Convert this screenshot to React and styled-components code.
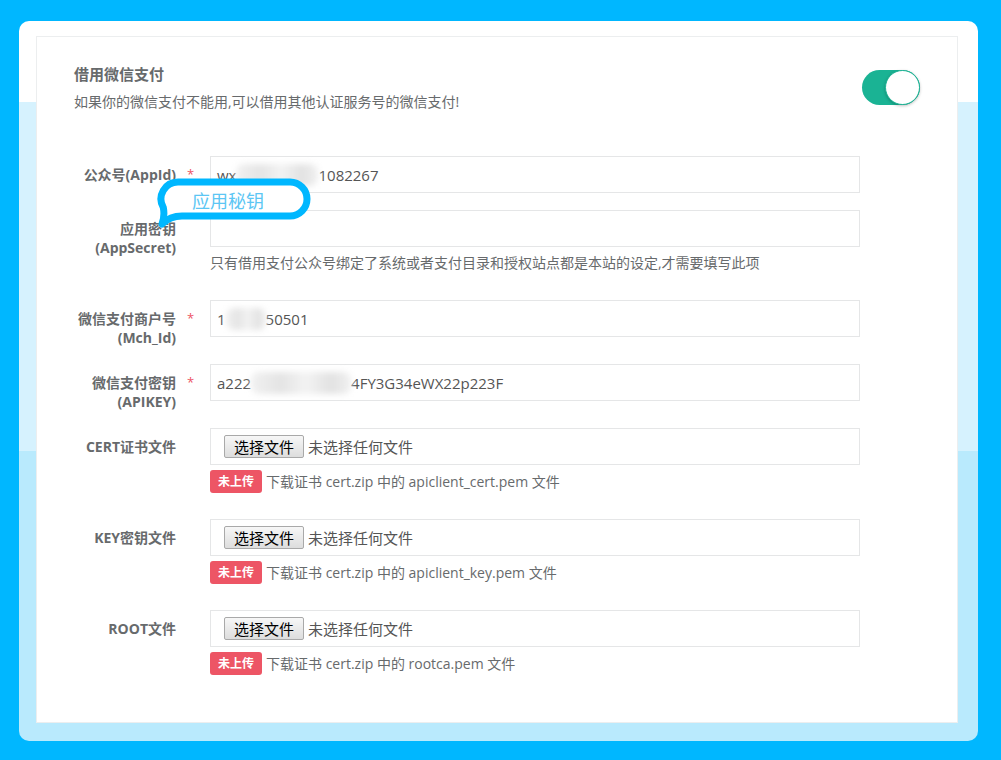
import React from "react";
import styled, { createGlobalStyle } from "styled-components";

const Global = createGlobalStyle`
  html, body { margin: 0; padding: 0; }
  body {
    background: #00b7ff;
    font-family: "Open Sans", "Noto Sans CJK SC", sans-serif;
  }
  * { box-sizing: border-box; }
`;

const Page = styled.div`
  width: 1001px;
  height: 760px;
  padding: 21px 23px 19px 19px;
  background: #00b7ff;
`;

const Frame = styled.div`
  width: 959px;
  height: 720px;
  border-radius: 10px;
  padding: 15px 20px 18px 17px;
  background: linear-gradient(
    to bottom,
    #ffffff 0px,
    #ffffff 81px,
    #d6f2fe 81px,
    #d6f2fe 430px,
    #b9eafd 430px,
    #b9eafd 100%
  );
`;

const Card = styled.div`
  position: relative;
  height: 100%;
  background: #ffffff;
  border: 1px solid #eceeef;
  padding: 27px 37px 0 37px;
  color: #676a6c;
`;

const Header = styled.div`
  display: flex;
  align-items: center;
  justify-content: space-between;
`;

const Title = styled.div`
  font-size: 15px;
  font-weight: 700;
  line-height: 20px;
  color: #676a6c;
`;

const Subtitle = styled.div`
  margin-top: 8px;
  font-size: 14px;
  line-height: 20px;
  color: #676a6c;
`;

const Toggle = styled.div`
  width: 58px;
  height: 35px;
  margin-top: -2px;
  border-radius: 18px;
  background: #1ab394;
  display: flex;
  justify-content: flex-end;
`;

const Knob = styled.div`
  width: 35px;
  height: 35px;
  border-radius: 50%;
  background: #ffffff;
  border: 1px solid #1ab394;
  box-shadow: 0 1px 3px rgba(0, 0, 0, 0.25);
`;

const Form = styled.div`
  margin-top: 44px;
`;

const FormGroup = styled.div`
  display: grid;
  grid-template-columns: 102px 34px 650px;
  align-items: start;
  margin-bottom: 17px;
`;

const Label = styled.div`
  padding-top: 9px;
  font-size: 14px;
  font-weight: 700;
  line-height: 19px;
  text-align: right;
  color: #676a6c;
  white-space: nowrap;
`;

const Req = styled.div`
  padding-top: 8px;
  padding-left: 11px;
  font-size: 13px;
  line-height: 20px;
  color: #ed5565;
`;

const Input = styled.div`
  height: 37px;
  border: 1px solid #e5e6e7;
  padding: 0 ${(p) => (p.$file ? "13px" : "6px")};
  display: flex;
  align-items: center;
  font-size: 15px;
  color: #555555;
  white-space: nowrap;
`;

const Blur = styled.span`
  display: inline-block;
  width: ${(p) => p.$w}px;
  height: 22px;
  border-radius: 8px;
  background: linear-gradient(
    to right,
    #f1f1f1,
    #e4e4e4 30%,
    #f3f3f3 55%,
    #e2e2e2 80%,
    #f0f0f0
  );
  filter: blur(3px);
`;

const FileButton = styled.span`
  display: inline-flex;
  align-items: center;
  height: 23px;
  padding: 0 9px;
  border: 1px solid #a9a9a9;
  border-radius: 2px;
  background: linear-gradient(to bottom, #f7f7f7, #dddddd);
  color: #000000;
  font-size: 15px;
  font-family: "Noto Sans CJK SC", sans-serif;
  line-height: 1;
`;

const FileName = styled.span`
  margin-left: 4px;
  font-size: 15px;
  color: #555555;
  font-family: "Noto Sans CJK SC", sans-serif;
`;

const Help = styled.div`
  display: flex;
  align-items: center;
  gap: 4px;
  margin: ${(p) => (p.$badge ? "5px 0 9px" : "6px 0 10px")};
  font-size: 14px;
  line-height: 20px;
  color: #676a6c;
  white-space: nowrap;
`;

const Badge = styled.span`
  display: inline-flex;
  align-items: center;
  justify-content: center;
  height: 23px;
  padding: 0 8px;
  border-radius: 3px;
  background: #ed5565;
  color: #ffffff;
  font-size: 12px;
  font-weight: 700;
`;

const Callout = styled.div`
  position: absolute;
  left: 119px;
  top: 140px;
  width: 158px;
  height: 52px;
`;

const CalloutText = styled.span`
  position: absolute;
  left: 36px;
  top: 11px;
  font-size: 18px;
  line-height: 24px;
  color: #5cc6f4;
  font-family: "Noto Sans CJK SC", sans-serif;
  white-space: nowrap;
`;

const CalloutShape = styled.svg`
  position: absolute;
  left: 0;
  top: 0;
`;

const Field = ({ label, required, children, help }) => (
  <FormGroup>
    <Label>{label}</Label>
    <Req>{required ? "*" : ""}</Req>
    <div>
      {children}
      {help}
    </div>
  </FormGroup>
);

const FileField = ({ label, hint }) => (
  <Field
    label={label}
    help={
      <Help $badge>
        <Badge>未上传</Badge>
        <span>{hint}</span>
      </Help>
    }
  >
    <Input $file>
      <FileButton>选择文件</FileButton>
      <FileName>未选择任何文件</FileName>
    </Input>
  </Field>
);

export default function App() {
  return (
    <>
      <Global />
      <Page>
        <Frame>
          <Card>
            <Header>
              <div>
                <Title>借用微信支付</Title>
                <Subtitle>如果你的微信支付不能用,可以借用其他认证服务号的微信支付!</Subtitle>
              </div>
              <Toggle>
                <Knob />
              </Toggle>
            </Header>

            <Form>
              <Field label="公众号(AppId)" required>
                <Input>
                  wx<Blur $w={82} />1082267
                </Input>
              </Field>

              <Field
                label={
                  <>
                    应用密钥
                    <br />
                    (AppSecret)
                  </>
                }
                help={
                  <Help>
                    只有借用支付公众号绑定了系统或者支付目录和授权站点都是本站的设定,才需要填写此项
                  </Help>
                }
              >
                <Input />
              </Field>

              <Field
                label={
                  <>
                    微信支付商户号
                    <br />
                    (Mch_Id)
                  </>
                }
                required
              >
                <Input>
                  1<Blur $w={40} />50501
                </Input>
              </Field>

              <Field
                label={
                  <>
                    微信支付密钥
                    <br />
                    (APIKEY)
                  </>
                }
                required
              >
                <Input>
                  a222<Blur $w={100} />4FY3G34eWX22p223F
                </Input>
              </Field>

              <FileField
                label="CERT证书文件"
                hint="下载证书 cert.zip 中的 apiclient_cert.pem 文件"
              />
              <FileField
                label="KEY密钥文件"
                hint="下载证书 cert.zip 中的 apiclient_key.pem 文件"
              />
              <FileField
                label="ROOT文件"
                hint="下载证书 cert.zip 中的 rootca.pem 文件"
              />
            </Form>

            <Callout>
              <CalloutShape width="158" height="52" viewBox="0 0 158 52">
                <path
                  d="M 22 5 H 134 A 17 17 0 0 1 134 39 H 26 Q 14 39 6 47 Q 9 39 7.3 30.5 A 17 17 0 0 1 22 5 Z"
                  fill="#ffffff"
                  stroke="#00b7ff"
                  strokeWidth="7"
                  strokeLinejoin="round"
                />
              </CalloutShape>
              <CalloutText>应用秘钥</CalloutText>
            </Callout>
          </Card>
        </Frame>
      </Page>
    </>
  );
}
